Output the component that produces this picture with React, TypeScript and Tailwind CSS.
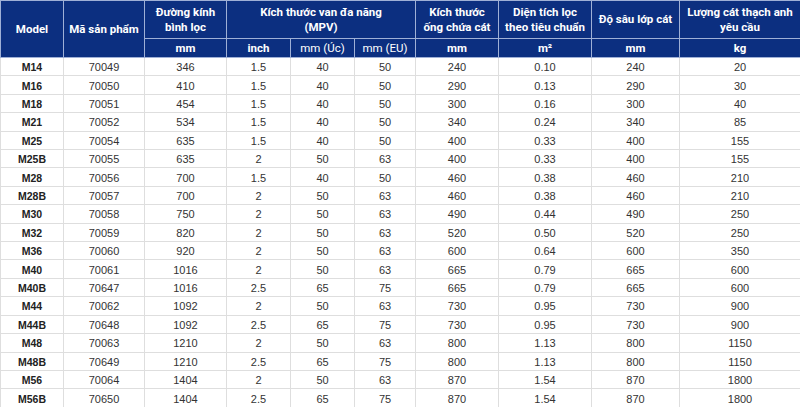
const rows: string[][] = [
  ["M14", "70049", "346", "1.5", "40", "50", "240", "0.10", "240", "20"],
  ["M16", "70050", "410", "1.5", "40", "50", "290", "0.13", "290", "30"],
  ["M18", "70051", "454", "1.5", "40", "50", "300", "0.16", "300", "40"],
  ["M21", "70052", "534", "1.5", "40", "50", "340", "0.24", "340", "85"],
  ["M25", "70054", "635", "1.5", "40", "50", "400", "0.33", "400", "155"],
  ["M25B", "70055", "635", "2", "50", "63", "400", "0.33", "400", "155"],
  ["M28", "70056", "700", "1.5", "40", "50", "460", "0.38", "460", "210"],
  ["M28B", "70057", "700", "2", "50", "63", "460", "0.38", "460", "210"],
  ["M30", "70058", "750", "2", "50", "63", "490", "0.44", "490", "250"],
  ["M32", "70059", "820", "2", "50", "63", "520", "0.50", "520", "250"],
  ["M36", "70060", "920", "2", "50", "63", "600", "0.64", "600", "350"],
  ["M40", "70061", "1016", "2", "50", "63", "665", "0.79", "665", "600"],
  ["M40B", "70647", "1016", "2.5", "65", "75", "665", "0.79", "665", "600"],
  ["M44", "70062", "1092", "2", "50", "63", "730", "0.95", "730", "900"],
  ["M44B", "70648", "1092", "2.5", "65", "75", "730", "0.95", "730", "900"],
  ["M48", "70063", "1210", "2", "50", "63", "800", "1.13", "800", "1150"],
  ["M48B", "70649", "1210", "2.5", "65", "75", "800", "1.13", "800", "1150"],
  ["M56", "70064", "1404", "2", "50", "63", "870", "1.54", "870", "1800"],
  ["M56B", "70650", "1404", "2.5", "65", "75", "870", "1.54", "870", "1800"],
];

const th = "border border-[#9fb0d6] bg-[#0c2f80] text-white font-bold text-center align-middle leading-[15px] px-1";

export default function App() {
  return (
    <div className="w-[800px] h-[407px] overflow-hidden bg-white font-['Roboto','Liberation_Sans',sans-serif]">
      <table className="w-[800px] table-fixed border-collapse text-[11.5px]">
        <colgroup>
          <col className="w-[63px]" />
          <col className="w-[81px]" />
          <col className="w-[82px]" />
          <col className="w-[64px]" />
          <col className="w-[64px]" />
          <col className="w-[61px]" />
          <col className="w-[83px]" />
          <col className="w-[93px]" />
          <col className="w-[88px]" />
          <col className="w-[121px]" />
        </colgroup>
        <thead>
          <tr className="h-[38px]">
            <th rowSpan={2} className={th}>Model</th>
            <th rowSpan={2} className={th}>Mã sản phẩm</th>
            <th className={th}>Đường kính<br />bình lọc</th>
            <th colSpan={3} className={th}>Kích thước van đa năng<br />(MPV)</th>
            <th className={th}>Kích thước<br />ống chứa cát</th>
            <th className={th}>Diện tích lọc<br />theo tiêu chuẩn</th>
            <th className={th}>Độ sâu lớp cát</th>
            <th className={th}>Lượng cát thạch anh<br />yêu cầu</th>
          </tr>
          <tr className="h-[19px]">
            <th className={th}>mm</th>
            <th className={th}>inch</th>
            <th className={th + " font-normal"}>mm (Úc)</th>
            <th className={th + " font-normal"}>mm (EU)</th>
            <th className={th}>mm</th>
            <th className={th}>m²</th>
            <th className={th}>mm</th>
            <th className={th}>kg</th>
          </tr>
        </thead>
        <tbody className="font-['Liberation_Sans',sans-serif] text-[11px] text-[#333]">
          {rows.map((r) => (
            <tr key={r[0]} className="h-[18.42px]">
              {r.map((c, i) => (
                <td
                  key={i}
                  className={
                    "border border-[#dedede] text-center align-middle leading-[14px] pt-[1px] pb-0 px-0 " +
                    (i === 0 ? "font-bold text-[10.5px] text-[#222]" : "")
                  }
                >
                  {c}
                </td>
              ))}
            </tr>
          ))}
        </tbody>
      </table>
    </div>
  );
}
